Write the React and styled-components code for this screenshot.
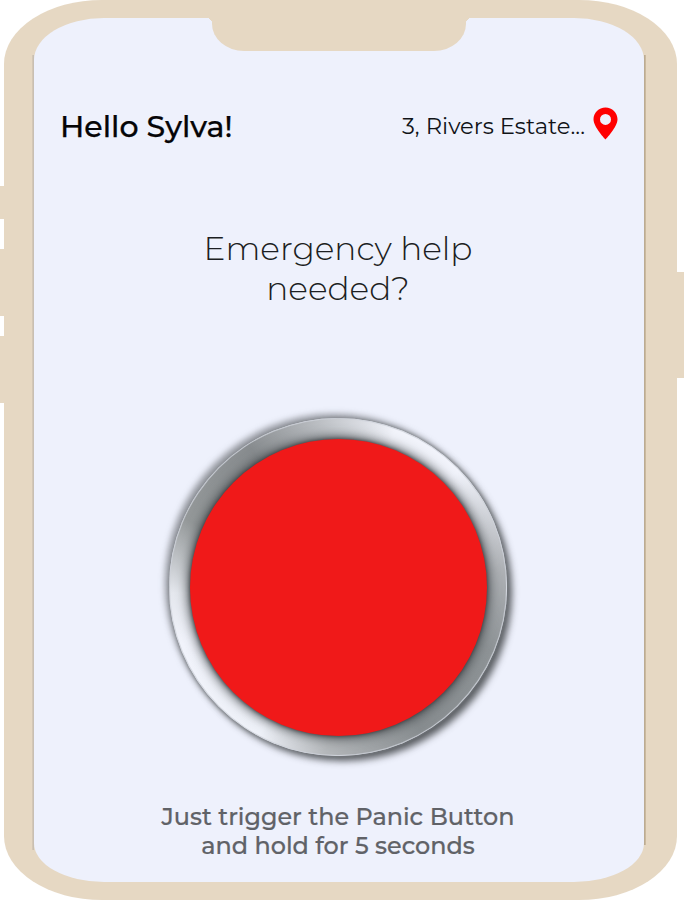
import React from "react";
import styled, { createGlobalStyle } from "styled-components";

const GlobalStyle = createGlobalStyle`
  body {
    margin: 0;
    background: #fff;
    font-family: Montserrat, Inter, "Open Sans", sans-serif;
  }
`;

const Phone = styled.div`
  width: 684px;
  height: 900px;
  display: flex;
  overflow: hidden;
`;

const Keys = styled.div`
  width: ${(props) => props.$width}px;
  display: flex;
  flex-direction: column;
  flex-shrink: 0;
`;

const Key = styled.span`
  height: ${(props) => props.$height}px;
  margin-top: ${(props) => props.$gap}px;
  background: #e6d8c3;
`;

/* the two thin gradients are the darker edges beside the screen */
const Bezel = styled.div`
  box-sizing: border-box;
  width: 673px;
  height: 900px;
  padding: 18px 33px 18px 30px;
  border-radius: 98px / 64px;
  background:
    linear-gradient(90deg, #d9cbb8, #c3bbb0) 28px 55px / 2px 795px no-repeat,
    linear-gradient(90deg, #b3a58e, #d3c0a3) 640px 55px / 2px 790px no-repeat,
    #e6d8c3;
`;

const Screen = styled.main`
  box-sizing: border-box;
  height: 864px;
  display: flex;
  flex-direction: column;
  align-items: center;
  border-radius: 70px 70px 70px 70px / 42px 42px 39px 39px;
  background: #eef1fc;
`;

const Notch = styled.div`
  width: 254px;
  height: 33px;
  border-radius: 0 0 32px 32px / 0 0 27px 27px;
  background: #e6d8c3;
  position: relative;

  &::before,
  &::after {
    content: "";
    position: absolute;
    top: 0;
    width: 5px;
    height: 6px;
  }
  &::before {
    left: -5px;
    background: radial-gradient(ellipse at 0 100%, transparent 70%, #e6d8c3 72%);
  }
  &::after {
    right: -5px;
    background: radial-gradient(ellipse at 100% 100%, transparent 70%, #e6d8c3 72%);
  }
`;

const Header = styled.header`
  box-sizing: border-box;
  width: 100%;
  height: 40px;
  margin-top: 56px;
  padding: 0 26px 0 26px;
  display: flex;
  align-items: center;
  justify-content: space-between;
`;

const Greeting = styled.h1`
  margin: 0;
  font-size: 30px;
  line-height: 40px;
  font-weight: 500;
  color: #050507;
  -webkit-text-stroke: 0.25px #050507;
  white-space: nowrap;
`;

const Location = styled.div`
  display: flex;
  align-items: center;
  gap: 8px;
  font-size: 22.7px;
  line-height: 38px;
  color: #101317;
  white-space: nowrap;
`;

const Address = styled.span`
  margin-top: -2px;
`;

const PinIcon = styled.svg`
  width: 25px;
  height: 33px;
  margin-top: -8px;
`;

const Question = styled.h2`
  margin: 81px 2px 0 0;
  font-size: 32.8px;
  line-height: 40px;
  font-weight: 300;
  text-align: center;
  color: #1c1e22;
  white-space: nowrap;
`;

const PanicButton = styled.button`
  width: 338px;
  height: 338px;
  margin: 110px 2px 0 0;
  padding: 0;
  border: 1px solid rgba(205, 210, 217, 0.75);
  border-radius: 50%;
  display: flex;
  align-items: center;
  justify-content: center;
  background: conic-gradient(
    #c9ccd1 0deg,
    #f1f3fa 20deg,
    #f1f3fb 46deg,
    #aeb1b5 84deg,
    #8e9396 112deg,
    #888d90 150deg,
    #b4b7ba 184deg,
    #eef1f8 208deg,
    #f1f3fb 250deg,
    #e4e7ed 268deg,
    #949899 294deg,
    #888c8f 328deg,
    #c9ccd1 360deg
  );
  box-shadow: 0 0 3px #85898d, -4px -4px 6px rgba(85, 89, 93, 0.6),
    5px 5px 7px rgba(65, 68, 72, 0.85);
`;

const RedCap = styled.span`
  width: 297px;
  height: 297px;
  border-radius: 50%;
  background: #f01919;
  box-shadow: 0 0 4px #34393c, 0 0 11px 3px rgba(70, 75, 79, 0.85);
`;

const Hint = styled.p`
  margin: 46px 2px 0 0;
  font-size: 23.9px;
  line-height: 29px;
  font-weight: 500;
  text-align: center;
  color: #606267;
  -webkit-text-stroke: 0.2px #606267;
  white-space: nowrap;
`;

const App = () => {
  return (
    <>
      <GlobalStyle />
      <Phone>
        <Keys $width={4}>
          <Key $gap={186} $height={33} />
          <Key $gap={30} $height={67} />
          <Key $gap={20} $height={67} />
        </Keys>
        <Bezel>
          <Screen>
            <Notch />
            <Header>
              <Greeting>Hello Sylva!</Greeting>
              <Location>
                <Address>3, Rivers Estate...</Address>
                <PinIcon viewBox="0 0 25 33" aria-hidden="true">
                  <path
                    fill="#ff0000"
                    fillRule="evenodd"
                    d="M12.5 0.5C5.8 0.5 0.5 5.8 0.5 12.3C0.5 20.2 12.5 32.5 12.5 32.5C12.5 32.5 24.5 20.2 24.5 12.3C24.5 5.8 19.2 0.5 12.5 0.5ZM12.5 6.9A5.5 5.5 0 1 1 12.5 17.9A5.5 5.5 0 1 1 12.5 6.9Z"
                  />
                </PinIcon>
              </Location>
            </Header>
            <Question>
              Emergency help
              <br />
              needed?
            </Question>
            <PanicButton type="button" aria-label="Panic Button">
              <RedCap />
            </PanicButton>
            <Hint>
              Just trigger the Panic Button
              <br />
              and hold for 5 seconds
            </Hint>
          </Screen>
        </Bezel>
        <Keys $width={7}>
          <Key $gap={272} $height={106} />
        </Keys>
      </Phone>
    </>
  );
};

export default App;
